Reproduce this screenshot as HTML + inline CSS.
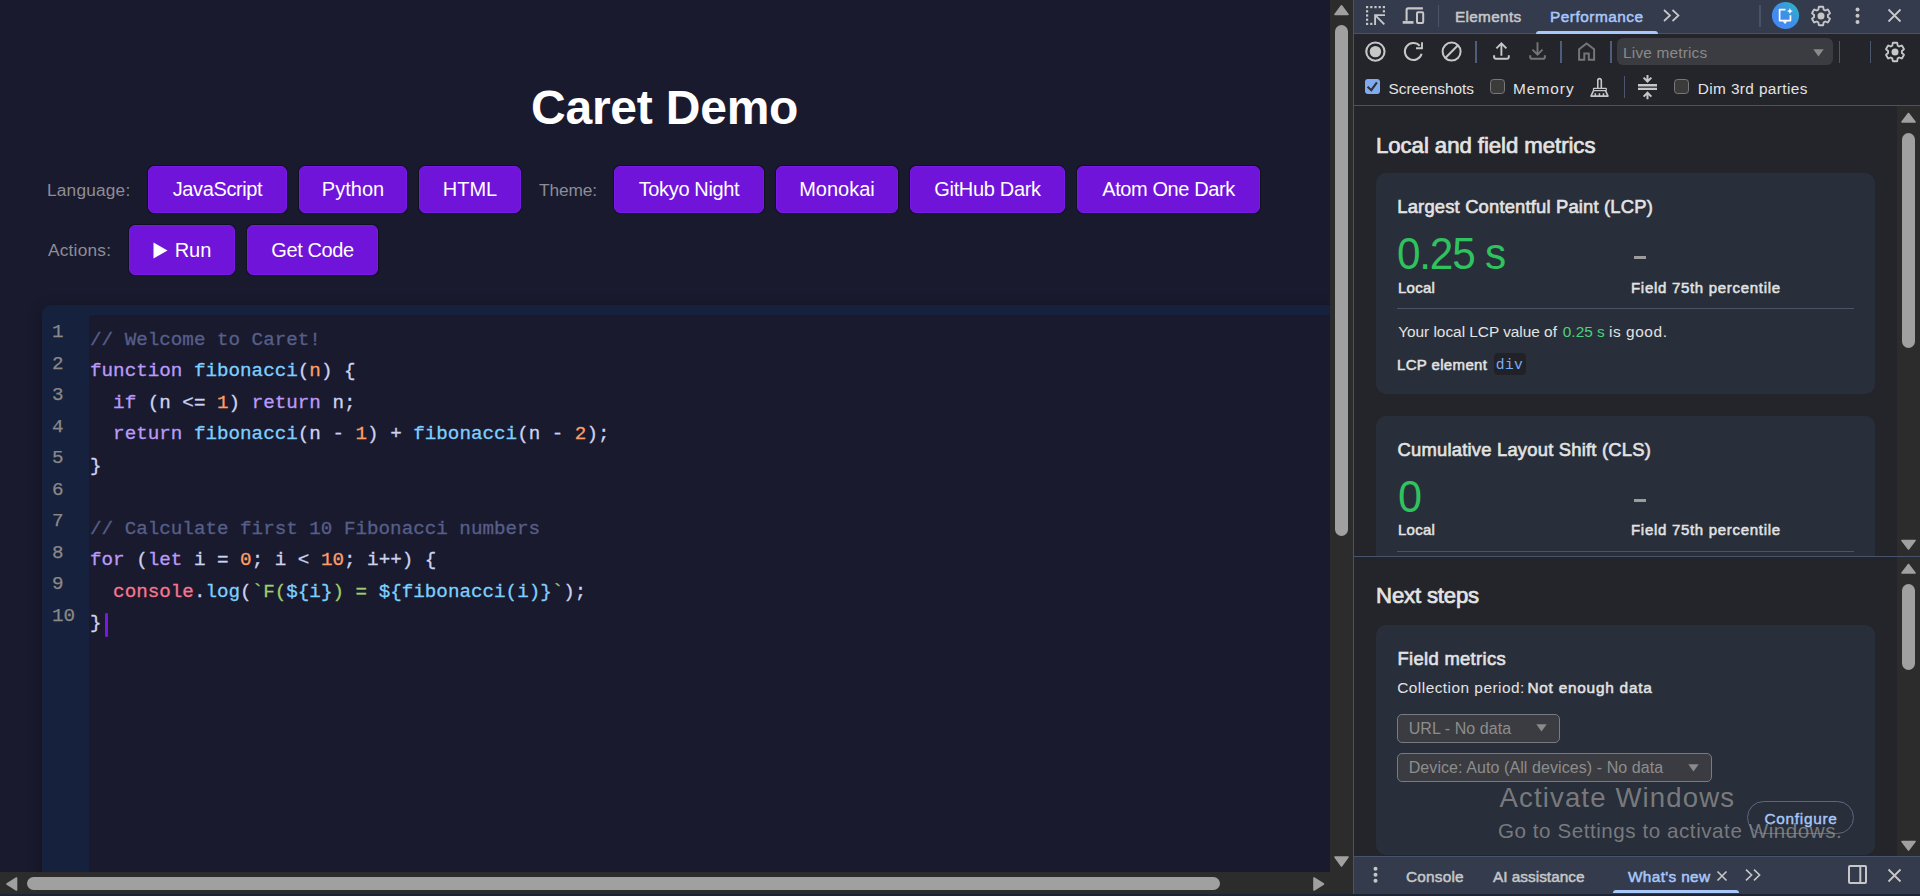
<!DOCTYPE html>
<html lang="en"><head><meta charset="utf-8"><title>Caret Demo</title>
<style>
*{box-sizing:border-box;margin:0;padding:0}
html,body{width:1920px;height:896px;overflow:hidden;background:#1a1a2e}
body{position:relative;font-family:"Liberation Sans",sans-serif;color:#e3e3e3}
.t{position:absolute;white-space:pre;line-height:1;display:block}
.b{position:absolute}
svg{position:absolute;overflow:visible}
h1,h2,h3{font-weight:inherit;font-size:inherit}
#page{position:absolute;left:0;top:0;width:1330px;height:872px;overflow:hidden;background:#1a1a2e}
button.pb{position:absolute;border:1px solid #7a18e6;background:#7014da;color:#fff;border-radius:6px;
 font:20px "Liberation Sans",sans-serif;display:flex;align-items:center;justify-content:center;white-space:pre;
 box-shadow:0 0 0 1px rgba(10,10,25,.55)}
.code{font-family:"Liberation Mono",monospace}
.k{color:#bb9af7}.f{color:#7dcfff}.n{color:#ff9e64}.c{color:#565f89}.p{color:#cdd3f0}.s{color:#9ece6a}.v{color:#f7768e}
#devtools{position:absolute;left:1353px;top:0;width:567px;height:896px;background:#24252a;overflow:hidden}
</style></head><body>
<main id="page">
<h1><span class="t" style="left:531.00px;top:84.17px;font-size:48px;color:#fff;font-weight:700;letter-spacing:-0.222px;">Caret Demo</span></h1>
<span class="t" style="left:47.00px;top:182.36px;font-size:17.3px;color:#8d8d95;letter-spacing:0.192px;">Language:</span>
<span class="t" style="left:539.00px;top:182.36px;font-size:17.3px;color:#8d8d95;letter-spacing:-0.1px;">Theme:</span>
<span class="t" style="left:48.00px;top:242.36px;font-size:17.3px;color:#8d8d95;letter-spacing:0.215px;">Actions:</span>
<button class="pb" style="left:148px;top:166px;width:139px;height:47px;letter-spacing:-0.39px">JavaScript</button>
<button class="pb" style="left:299px;top:166px;width:108px;height:47px">Python</button>
<button class="pb" style="left:419px;top:166px;width:102px;height:47px">HTML</button>
<button class="pb" style="left:614px;top:166px;width:150px;height:47px;letter-spacing:-0.35px">Tokyo Night</button>
<button class="pb" style="left:776px;top:166px;width:122px;height:47px">Monokai</button>
<button class="pb" style="left:910px;top:166px;width:155px;height:47px;letter-spacing:-0.33px">GitHub Dark</button>
<button class="pb" style="left:1077px;top:166px;width:183px;height:47px;letter-spacing:-0.4px">Atom One Dark</button>
<button class="pb" style="left:129px;top:225px;width:106px;height:50px"><svg style="position:static;margin-right:7px" width="15" height="17" viewBox="0 0 15 17"><path d="M0.5 0.5 L14.5 8.5 L0.5 16.5 Z" fill="#fff"/></svg>Run</button>
<button class="pb" style="left:247px;top:225px;width:131px;height:50px;letter-spacing:-0.39px">Get Code</button>
<div class="b" style="left:42px;top:305px;width:1358px;height:595px;background:#16213e;border-radius:9px 0 0 0;box-shadow:0 4px 14px rgba(0,0,0,.35)"></div>
<div class="b" style="left:89px;top:315px;width:1311px;height:585px;background:#1a1a2e;border-radius:3px 0 0 0"></div>
<span class="t" style="left:52.00px;top:323.05px;font-size:19.24px;color:#8a8986;font-family:'Liberation Mono', monospace;-webkit-text-stroke:0.25px #8a8986;">1</span>
<span class="t" style="left:52.00px;top:354.55px;font-size:19.24px;color:#8a8986;font-family:'Liberation Mono', monospace;-webkit-text-stroke:0.25px #8a8986;">2</span>
<span class="t" style="left:52.00px;top:386.05px;font-size:19.24px;color:#8a8986;font-family:'Liberation Mono', monospace;-webkit-text-stroke:0.25px #8a8986;">3</span>
<span class="t" style="left:52.00px;top:417.55px;font-size:19.24px;color:#8a8986;font-family:'Liberation Mono', monospace;-webkit-text-stroke:0.25px #8a8986;">4</span>
<span class="t" style="left:52.00px;top:449.05px;font-size:19.24px;color:#8a8986;font-family:'Liberation Mono', monospace;-webkit-text-stroke:0.25px #8a8986;">5</span>
<span class="t" style="left:52.00px;top:480.55px;font-size:19.24px;color:#8a8986;font-family:'Liberation Mono', monospace;-webkit-text-stroke:0.25px #8a8986;">6</span>
<span class="t" style="left:52.00px;top:512.05px;font-size:19.24px;color:#8a8986;font-family:'Liberation Mono', monospace;-webkit-text-stroke:0.25px #8a8986;">7</span>
<span class="t" style="left:52.00px;top:543.55px;font-size:19.24px;color:#8a8986;font-family:'Liberation Mono', monospace;-webkit-text-stroke:0.25px #8a8986;">8</span>
<span class="t" style="left:52.00px;top:575.05px;font-size:19.24px;color:#8a8986;font-family:'Liberation Mono', monospace;-webkit-text-stroke:0.25px #8a8986;">9</span>
<span class="t" style="left:52.00px;top:606.55px;font-size:19.24px;color:#8a8986;font-family:'Liberation Mono', monospace;-webkit-text-stroke:0.25px #8a8986;">10</span>
<span class="t code" style="left:90.00px;top:330.65px;font-size:19.24px;color:#cdd3f0;font-family:'Liberation Mono', monospace;-webkit-text-stroke:.3px"><span class="c">// Welcome to Caret!</span></span>
<span class="t code" style="left:90.00px;top:362.15px;font-size:19.24px;color:#cdd3f0;font-family:'Liberation Mono', monospace;-webkit-text-stroke:.3px"><span class="k">function</span> <span class="f">fibonacci</span><span class="p">(</span><span class="n">n</span><span class="p">) {</span></span>
<span class="t code" style="left:90.00px;top:393.65px;font-size:19.24px;color:#cdd3f0;font-family:'Liberation Mono', monospace;-webkit-text-stroke:.3px">  <span class="k">if</span> <span class="p">(n &lt;= </span><span class="n">1</span><span class="p">) </span><span class="k">return</span> <span class="p">n;</span></span>
<span class="t code" style="left:90.00px;top:425.15px;font-size:19.24px;color:#cdd3f0;font-family:'Liberation Mono', monospace;-webkit-text-stroke:.3px">  <span class="k">return</span> <span class="f">fibonacci</span><span class="p">(n - </span><span class="n">1</span><span class="p">) + </span><span class="f">fibonacci</span><span class="p">(n - </span><span class="n">2</span><span class="p">);</span></span>
<span class="t code" style="left:90.00px;top:456.65px;font-size:19.24px;color:#cdd3f0;font-family:'Liberation Mono', monospace;-webkit-text-stroke:.3px"><span class="p">}</span></span>
<span class="t code" style="left:90.00px;top:519.65px;font-size:19.24px;color:#cdd3f0;font-family:'Liberation Mono', monospace;-webkit-text-stroke:.3px"><span class="c">// Calculate first 10 Fibonacci numbers</span></span>
<span class="t code" style="left:90.00px;top:551.15px;font-size:19.24px;color:#cdd3f0;font-family:'Liberation Mono', monospace;-webkit-text-stroke:.3px"><span class="k">for</span> <span class="p">(</span><span class="k">let</span> <span class="p">i = </span><span class="n">0</span><span class="p">; i &lt; </span><span class="n">10</span><span class="p">; i++) {</span></span>
<span class="t code" style="left:90.00px;top:582.65px;font-size:19.24px;color:#cdd3f0;font-family:'Liberation Mono', monospace;-webkit-text-stroke:.3px">  <span class="v">console</span><span class="p">.</span><span class="f">log</span><span class="p">(</span><span class="s">`F(</span><span class="f">${i}</span><span class="s">) = </span><span class="f">${fibonacci(i)}</span><span class="s">`</span><span class="p">);</span></span>
<span class="t code" style="left:90.00px;top:614.15px;font-size:19.24px;color:#cdd3f0;font-family:'Liberation Mono', monospace;-webkit-text-stroke:.3px"><span class="p">}</span></span>
<div class="b" style="left:105.3px;top:613px;width:2.700000000000003px;height:24px;background:#7a18e2;border-radius:1.3px"></div>
</main>
<div class="b" style="left:1330px;top:0px;width:23px;height:894px;background:#2c2c2c;"></div>
<div class="b" style="left:0px;top:872px;width:1353px;height:22px;background:#2c2c2c;"></div>
<div class="b" style="left:1335px;top:25px;width:13px;height:510.5px;background:#a0a0a0;border-radius:6.5px"></div>
<div class="b" style="left:27px;top:877px;width:1193px;height:13px;background:#a0a0a0;border-radius:6.5px"></div>
<svg width="1920" height="896" style="left:0;top:0;pointer-events:none"><path d="M1341.5 5.8 L1348 14.4 L1335 14.4 Z" fill="#a0a0a0" stroke="#a0a0a0" stroke-width="1.6" stroke-linejoin="round"/></svg>
<svg width="1920" height="896" style="left:0;top:0;pointer-events:none"><path d="M1341.5 866 L1348 857 L1335 857 Z" fill="#a0a0a0" stroke="#a0a0a0" stroke-width="1.6" stroke-linejoin="round"/></svg>
<svg width="1920" height="896" style="left:0;top:0;pointer-events:none"><path d="M7 884 L16.5 878 L16.5 890 Z" fill="#a0a0a0" stroke="#a0a0a0" stroke-width="1.6" stroke-linejoin="round"/></svg>
<svg width="1920" height="896" style="left:0;top:0;pointer-events:none"><path d="M1323.5 884 L1314 878 L1314 890 Z" fill="#a0a0a0" stroke="#a0a0a0" stroke-width="1.6" stroke-linejoin="round"/></svg>
<div class="b" style="left:0px;top:894px;width:1920px;height:2px;background:#1c2433;"></div>
<aside id="devtools">
<div class="b" style="left:0px;top:0px;width:1px;height:896px;background:#47536b;"></div>
<div class="b" style="left:1px;top:0px;width:566px;height:33px;background:#333b4d;"></div>
<div class="b" style="left:1px;top:33px;width:566px;height:1px;background:#47536b;"></div>
<svg style="left:13px;top:6px" width="20" height="20" viewBox="0 0 20 20" fill="none"><g fill="#c7c7c7"><rect x="0" y="0" width="2.2" height="2.2"/><rect x="4.2" y="0" width="2.2" height="2.2"/><rect x="8.4" y="0" width="2.2" height="2.2"/><rect x="12.6" y="0" width="2.2" height="2.2"/><rect x="16.8" y="0" width="2.2" height="2.2"/><rect x="0" y="4.2" width="2.2" height="2.2"/><rect x="0" y="8.4" width="2.2" height="2.2"/><rect x="0" y="12.6" width="2.2" height="2.2"/><rect x="0" y="16.8" width="2.2" height="2.2"/><rect x="16.8" y="4.2" width="2.2" height="2.2"/><rect x="4.2" y="16.8" width="2.2" height="2.2"/></g><path d="M9.1 19V9.1H19M9.4 9.4L18.3 18.3" stroke="#c7c7c7" stroke-width="1.9"/></svg>
<svg style="left:49px;top:7px" width="24" height="17" viewBox="0 0 24 17" fill="none"><path d="M4.6 13.8V2.9a1.5 1.5 0 0 1 1.5-1.5H20.9" stroke="#c7c7c7" stroke-width="2.1"/><path d="M0.7 15.4h10.8" stroke="#c7c7c7" stroke-width="2.7"/><rect x="15" y="5.3" width="6.2" height="10.7" rx="0.9" stroke="#c7c7c7" stroke-width="2"/></svg>
<div class="b" style="left:85px;top:5px;width:1.2000000000000455px;height:22px;background:#4b5468;"></div>
<span class="t" style="left:101.90px;top:9.46px;font-size:15.4px;color:#c7c7c7;letter-spacing:0.302px;-webkit-text-stroke:0.5px #c7c7c7;">Elements</span>
<span class="t" style="left:197.00px;top:9.46px;font-size:15.4px;color:#a8c7fa;letter-spacing:0.5px;-webkit-text-stroke:0.5px #a8c7fa;">Performance</span>
<div class="b" style="left:183px;top:31px;width:122px;height:3px;background:#a8c7fa;border-radius:3px 3px 0 0"></div>
<svg style="left:310px;top:9px" width="17" height="13" viewBox="0 0 17 13" fill="none"><path d="M1 1l6 5.5L1 12M9.5 1l6 5.5-6 5.5" stroke="#c7c7c7" stroke-width="1.7"/></svg>
<div class="b" style="left:406.4000000000001px;top:5px;width:1.3999999999998636px;height:22px;background:#4a5268;"></div>
<svg style="left:419px;top:2px" width="27" height="27" viewBox="0 0 27 27" fill="none"><defs><linearGradient id="aig" x1="0.1" y1="0.9" x2="0.9" y2="0.1"><stop offset="0" stop-color="#4586f6"/><stop offset="0.5" stop-color="#3f8fe8"/><stop offset="1" stop-color="#2fb0c8"/></linearGradient></defs><circle cx="13.5" cy="13.5" r="13.6" fill="url(#aig)"/><path d="M13.5 7.6H7.6V18.6H18.45V13.3" stroke="#fff" stroke-width="1.7" stroke-linejoin="round"/><path d="M10.6 19.2h4.8L13 22.1z" fill="#fff"/><path d="M17.9 6.1l.9 2.1 2.1.9-2.1.9-.9 2.1-.9-2.1-2.1-.9 2.1-.9z" fill="#fff"/></svg>
<svg style="left:455.5px;top:3.6500000000000004px" width="24" height="24" viewBox="0 0 24 24" fill="none"><path d="M19.14 12.94c.04-.3.06-.61.06-.94 0-.32-.02-.64-.07-.94l2.03-1.58a.49.49 0 0 0 .12-.61l-1.92-3.32a.488.488 0 0 0-.59-.22l-2.39.96c-.5-.38-1.03-.7-1.62-.94l-.36-2.54a.484.484 0 0 0-.48-.41h-3.84c-.24 0-.43.17-.47.41l-.36 2.54c-.59.24-1.13.57-1.62.94l-2.39-.96c-.22-.08-.47 0-.59.22L2.74 8.87c-.12.21-.08.47.12.61l2.03 1.58c-.05.3-.09.63-.09.94s.02.64.07.94l-2.03 1.58a.49.49 0 0 0-.12.61l1.92 3.32c.12.22.37.29.59.22l2.39-.96c.5.38 1.03.7 1.62.94l.36 2.54c.05.24.24.41.48.41h3.84c.24 0 .44-.17.47-.41l.36-2.54c.59-.24 1.13-.56 1.62-.94l2.39.96c.22.08.47 0 .59-.22l1.92-3.32c.12-.22.07-.47-.12-.61l-2.01-1.58z" stroke="#c7c7c7" stroke-width="1.9" stroke-linejoin="round" transform="translate(12 12) scale(0.96 0.965) translate(-12 -12)"/><circle cx="12" cy="12" r="3.5" fill="#c7c7c7"/></svg>
<svg style="left:502px;top:7px" width="5" height="18" viewBox="0 0 5 18" fill="none"><circle cx="2.5" cy="2.5" r="2" fill="#c7c7c7"/><circle cx="2.5" cy="8.7" r="2" fill="#c7c7c7"/><circle cx="2.5" cy="15" r="2" fill="#c7c7c7"/></svg>
<svg style="left:535px;top:9px" width="13" height="13" viewBox="0 0 13 13" fill="none"><path d="M0.5 0.5l12 12M12.5 0.5l-12 12" stroke="#c7c7c7" stroke-width="1.8"/></svg>
<svg style="left:12px;top:41px" width="21" height="21" viewBox="0 0 21 21" fill="none"><circle cx="10.4" cy="10.6" r="9.15" stroke="#c7c7c7" stroke-width="2.1"/><circle cx="10.4" cy="10.6" r="5.7" fill="#c7c7c7"/></svg>
<svg style="left:50px;top:41px" width="22" height="22" viewBox="0 0 22 22" fill="none"><path d="M16.7 4.8A8.5 8.5 0 1 0 18.6 12.7" stroke="#c7c7c7" stroke-width="2"/><path d="M19 1.2V7.2H13" stroke="#c7c7c7" stroke-width="1.9"/></svg>
<svg style="left:88px;top:41px" width="21" height="21" viewBox="0 0 21 21" fill="none"><circle cx="10.6" cy="10.6" r="9" stroke="#c7c7c7" stroke-width="2"/><path d="M4.3 17L17 4.3" stroke="#c7c7c7" stroke-width="2"/></svg>
<div class="b" style="left:122.29999999999995px;top:41px;width:1.6000000000001364px;height:22px;background:#4e5d7a;"></div>
<svg style="left:140px;top:42px" width="17" height="18" viewBox="0 0 17 18" fill="none"><path d="M8.4 13.7V1.6M3.4 6.3L8.4 1.3l5 5" stroke="#c7c7c7" stroke-width="1.9"/><path d="M1.1 13.3v1.6a1.8 1.8 0 0 0 1.8 1.8h11.1a1.8 1.8 0 0 0 1.8-1.8v-1.6" stroke="#c7c7c7" stroke-width="2"/></svg>
<svg style="left:176px;top:42px" width="17" height="18" viewBox="0 0 17 18" fill="none"><path d="M8.5 0.2V12M3.5 7.6l5 5 5-5" stroke="#757575" stroke-width="1.9"/><path d="M1.2 13.3v1.6a1.8 1.8 0 0 0 1.8 1.8h11.1a1.8 1.8 0 0 0 1.8-1.8v-1.6" stroke="#757575" stroke-width="2"/></svg>
<div class="b" style="left:207.29999999999995px;top:41px;width:1.6000000000001364px;height:22px;background:#4e5d7a;"></div>
<svg style="left:225px;top:42px" width="17" height="19" viewBox="0 0 17 19" fill="none"><path d="M1.1 17.8V7.2L8.6 1.5l7.5 5.7V17.8h-5.3v-6.4H6.3V17.8z" stroke="#757575" stroke-width="2"/></svg>
<div class="b" style="left:257.29999999999995px;top:41px;width:1.6000000000001364px;height:22px;background:#4e5d7a;"></div>
<div class="b" style="left:264px;top:38px;width:216px;height:27px;background:#3b3c41;border-radius:6px"></div>
<span class="t" style="left:270.10px;top:44.96px;font-size:15.4px;color:#8a8a8a;letter-spacing:0.172px;">Live metrics</span>
<svg style="left:460px;top:49px" width="11" height="8" viewBox="0 0 11 8" fill="none"><path d="M0.3 0.3h10.4L5.5 7.6z" fill="#8a8a8a"/></svg>
<div class="b" style="left:486px;top:41px;width:1px;height:22px;background:#4a5670;"></div>
<div class="b" style="left:517px;top:41px;width:1px;height:22px;background:#4a5670;"></div>
<svg style="left:529.5px;top:39.5px" width="24" height="24" viewBox="0 0 24 24" fill="none"><path d="M19.14 12.94c.04-.3.06-.61.06-.94 0-.32-.02-.64-.07-.94l2.03-1.58a.49.49 0 0 0 .12-.61l-1.92-3.32a.488.488 0 0 0-.59-.22l-2.39.96c-.5-.38-1.03-.7-1.62-.94l-.36-2.54a.484.484 0 0 0-.48-.41h-3.84c-.24 0-.43.17-.47.41l-.36 2.54c-.59.24-1.13.57-1.62.94l-2.39-.96c-.22-.08-.47 0-.59.22L2.74 8.87c-.12.21-.08.47.12.61l2.03 1.58c-.05.3-.09.63-.09.94s.02.64.07.94l-2.03 1.58a.49.49 0 0 0-.12.61l1.92 3.32c.12.22.37.29.59.22l2.39-.96c.5.38 1.03.7 1.62.94l.36 2.54c.05.24.24.41.48.41h3.84c.24 0 .44-.17.47-.41l.36-2.54c.59-.24 1.13-.56 1.62-.94l2.39.96c.22.08.47 0 .59-.22l1.92-3.32c.12-.22.07-.47-.12-.61l-2.01-1.58z" stroke="#c7c7c7" stroke-width="1.9" stroke-linejoin="round" transform="translate(12 12) scale(0.96 0.965) translate(-12 -12)"/><circle cx="12" cy="12" r="3.5" fill="#c7c7c7"/></svg>
<div class="b" style="left:12px;top:79px;width:15px;height:15px;background:#80aaf0;border-radius:3px"><svg style="left:0;top:0" width="15" height="15" viewBox="0 0 15 15" fill="none"><path d="M2.6 7.8l3.7 3.4 5.6-7.9" stroke="#2f3034" stroke-width="2.1"/></svg></div>
<span class="t" style="left:35.50px;top:80.66px;font-size:15.4px;color:#e3e3e3;">Screenshots</span>
<div class="b" style="left:137px;top:79px;width:15px;height:15px;background:#3b3b3b;border-radius:3.5px;border:1.5px solid #787878"></div>
<span class="t" style="left:160.00px;top:80.66px;font-size:15.4px;color:#e3e3e3;letter-spacing:1.0px;">Memory</span>
<svg style="left:237px;top:78px" width="19" height="19" viewBox="0 0 19 19" fill="none"><path d="M7.8 10.2V2.4a1.75 1.75 0 0 1 3.5 0V10.2" stroke="#c7c7c7" stroke-width="1.6"/><rect x="3.5" y="10.4" width="12.8" height="2.1" rx="0.4" stroke="#c7c7c7" stroke-width="1.25"/><path d="M3.4 12.8L1 18.1H18L15.6 12.8" stroke="#c7c7c7" stroke-width="1.6" stroke-linejoin="round"/><path d="M5.3 18v-2.7M9.4 18v-2.7M13.5 18v-2.7" stroke="#c7c7c7" stroke-width="1.6"/></svg>
<div class="b" style="left:271px;top:76px;width:1px;height:22px;background:#4a5670;"></div>
<svg style="left:285px;top:75px" width="19" height="25" viewBox="0 0 19 25" fill="none"><path d="M0 10.25h19M0 13.95h19" stroke="#c7c7c7" stroke-width="2.3"/><path d="M9.5 0v6M5.6 2.6l3.9 3.9 3.9-3.9" stroke="#c7c7c7" stroke-width="2"/><path d="M9.5 24.2v-6M5.6 21.6l3.9-3.9 3.9 3.9" stroke="#c7c7c7" stroke-width="2"/></svg>
<div class="b" style="left:321px;top:79px;width:15px;height:15px;background:#3b3b3b;border-radius:3.5px;border:1.5px solid #787878"></div>
<span class="t" style="left:344.75px;top:80.66px;font-size:15.4px;color:#e3e3e3;letter-spacing:0.375px;">Dim 3rd parties</span>
<div class="b" style="left:1px;top:105px;width:566px;height:1px;background:#47536b;"></div>
<section id="metrics" class="b" style="left:1px;top:106px;width:566px;height:450px;overflow:hidden">
<h2><span class="t" style="left:22.00px;top:28.51px;font-size:22.2px;color:#e3e3e3;letter-spacing:-0.058px;-webkit-text-stroke:0.7px #e3e3e3;">Local and field metrics</span></h2>
<div class="b" style="left:22px;top:67px;width:499px;height:221px;background:#292f3a;border-radius:10px"></div>
<h3><span class="t" style="left:43.30px;top:92.22px;font-size:18.4px;color:#e3e3e3;letter-spacing:0.173px;-webkit-text-stroke:0.6px #e3e3e3;">Largest Contentful Paint (LCP)</span></h3>
<span class="t" style="left:42.80px;top:124.71px;font-size:45px;color:#30c25e;letter-spacing:-1.28px;transform:scaleX(.94);transform-origin:0 0;">0.25 s</span>
<div class="b" style="left:280px;top:150px;width:12px;height:3px;background:#9c9c9c;"></div>
<span class="t" style="left:43.90px;top:174.10px;font-size:15px;color:#e3e3e3;letter-spacing:0.275px;-webkit-text-stroke:0.5px #e3e3e3;">Local</span>
<span class="t" style="left:277.00px;top:174.10px;font-size:15px;color:#e3e3e3;letter-spacing:0.7px;-webkit-text-stroke:0.5px #e3e3e3;">Field 75th percentile</span>
<div class="b" style="left:43px;top:202px;width:457px;height:1px;background:#4a5468;"></div>
<p><span class="t" style="left:44.20px;top:217.96px;font-size:15.4px;color:#e3e3e3;letter-spacing:-0.018px;">Your local LCP value of</span><span class="t" style="left:208.80px;top:217.96px;font-size:15.4px;color:#4dd17a;">0.25 s </span><span class="t" style="left:255.00px;top:217.96px;font-size:15.4px;color:#e3e3e3;letter-spacing:0.571px;">is good.</span></p>
<span class="t" style="left:43.00px;top:251.30px;font-size:15px;color:#e3e3e3;letter-spacing:0.35px;-webkit-text-stroke:0.5px #e3e3e3;">LCP element</span>
<div class="b" style="left:140px;top:247px;width:32px;height:22px;background:#202227;border-radius:4px"></div>
<span class="t" style="left:141.80px;top:252.31px;font-size:14.6px;color:#7cacf8;font-family:'Liberation Mono', monospace;letter-spacing:0.35px;">div</span>
<div class="b" style="left:22px;top:310px;width:499px;height:224px;background:#292f3a;border-radius:10px"></div>
<h3><span class="t" style="left:43.50px;top:335.42px;font-size:18.4px;color:#e3e3e3;letter-spacing:0.214px;-webkit-text-stroke:0.6px #e3e3e3;">Cumulative Layout Shift (CLS)</span></h3>
<span class="t" style="left:43.50px;top:368.11px;font-size:45px;color:#30c25e;letter-spacing:-2.2px;transform:scaleX(.96);transform-origin:0 0;">0</span>
<div class="b" style="left:280px;top:393px;width:12px;height:3px;background:#9c9c9c;"></div>
<span class="t" style="left:43.90px;top:416.30px;font-size:15px;color:#e3e3e3;letter-spacing:0.275px;-webkit-text-stroke:0.5px #e3e3e3;">Local</span>
<span class="t" style="left:277.00px;top:416.30px;font-size:15px;color:#e3e3e3;letter-spacing:0.7px;-webkit-text-stroke:0.5px #e3e3e3;">Field 75th percentile</span>
<div class="b" style="left:43px;top:445px;width:457px;height:1px;background:#4a5468;"></div>
<div class="b" style="left:543px;top:0px;width:23px;height:450px;background:#2c2c2c;"></div>
<div class="b" style="left:548px;top:27px;width:13.299999999999955px;height:215px;background:#a0a0a0;border-radius:6.65px"></div>
<svg width="566" height="450" style="left:0;top:0"><path d="M554.5 7.5 L561 16 L548 16 Z M554.5 443 L561 434.5 L548 434.5 Z" fill="#a0a0a0" stroke="#a0a0a0" stroke-width="1.6" stroke-linejoin="round"/></svg>
</section>
<div class="b" style="left:1px;top:556px;width:566px;height:1px;background:#47536b;"></div>
<section id="next" class="b" style="left:1px;top:557px;width:566px;height:299px;overflow:hidden">
<h2><span class="t" style="left:22.10px;top:28.21px;font-size:22.2px;color:#e3e3e3;letter-spacing:-0.198px;-webkit-text-stroke:0.7px #e3e3e3;">Next steps</span></h2>
<div class="b" style="left:22px;top:68px;width:499px;height:230px;background:#292f3a;border-radius:10px"></div>
<h3><span class="t" style="left:43.50px;top:93.22px;font-size:18.4px;color:#e3e3e3;letter-spacing:0.324px;-webkit-text-stroke:0.6px #e3e3e3;">Field metrics</span></h3>
<p><span class="t" style="left:43.20px;top:122.96px;font-size:15.4px;color:#e3e3e3;letter-spacing:0.482px;">Collection period:</span><span class="t" style="left:173.40px;top:122.96px;font-size:15.4px;color:#e3e3e3;letter-spacing:0.757px;-webkit-text-stroke:0.5px #e3e3e3;">Not enough data</span></p>
<div class="b" style="left:43px;top:157px;width:163px;height:29px;background:#3b3c41;border:1px solid #767a82;border-radius:5px"></div>
<span class="t" style="left:54.70px;top:163.66px;font-size:16px;color:#8d8d8d;letter-spacing:0.067px;">URL - No data</span>
<svg style="left:182px;top:167px" width="11" height="8" viewBox="0 0 11 8"><path d="M0.3 0.3h10.4L5.5 7.6z" fill="#8a8a8a"/></svg>
<div class="b" style="left:43px;top:196px;width:315px;height:29px;background:#3b3c41;border:1px solid #767a82;border-radius:5px"></div>
<span class="t" style="left:54.70px;top:202.66px;font-size:16px;color:#8d8d8d;letter-spacing:0.083px;">Device: Auto (All devices) - No data</span>
<svg style="left:334px;top:207px" width="11" height="8" viewBox="0 0 11 8"><path d="M0.3 0.3h10.4L5.5 7.6z" fill="#8a8a8a"/></svg>
<div class="b" style="left:393px;top:244px;width:107px;height:33px;background:transparent;border:1px solid #5b6780;border-radius:17px"></div>
<span class="t" style="left:410.50px;top:253.96px;font-size:15.4px;color:#a8c7fa;letter-spacing:0.7px;-webkit-text-stroke:0.4px #a8c7fa;">Configure</span>
<span class="t" style="left:145.50px;top:226.64px;font-size:27.6px;color:rgba(150,150,150,.74);letter-spacing:1.118px;">Activate Windows</span>
<span class="t" style="left:144.00px;top:264.36px;font-size:20.6px;color:rgba(150,150,150,.74);letter-spacing:0.55px;">Go to Settings to activate Windows.</span>
<div class="b" style="left:543px;top:0px;width:23px;height:299px;background:#2c2c2c;"></div>
<div class="b" style="left:548px;top:26.5px;width:13.299999999999955px;height:86.5px;background:#a0a0a0;border-radius:6.65px"></div>
<svg width="566" height="299" style="left:0;top:0"><path d="M554.5 7.5 L561 16 L548 16 Z M554.5 293 L561 284.5 L548 284.5 Z" fill="#a0a0a0" stroke="#a0a0a0" stroke-width="1.6" stroke-linejoin="round"/></svg>
</section>
<div class="b" style="left:1px;top:856px;width:566px;height:38px;background:#333b4d;border-top:1px solid #47536b"></div>
<svg style="left:20px;top:866px" width="5" height="18" viewBox="0 0 5 18" fill="none"><circle cx="2.5" cy="2.7" r="2" fill="#c7c7c7"/><circle cx="2.5" cy="8.7" r="2" fill="#c7c7c7"/><circle cx="2.5" cy="14.7" r="2" fill="#c7c7c7"/></svg>
<span class="t" style="left:53.00px;top:868.96px;font-size:15.4px;color:#c7c7c7;letter-spacing:0.183px;-webkit-text-stroke:0.5px #c7c7c7;">Console</span>
<span class="t" style="left:140.00px;top:868.96px;font-size:15.4px;color:#c7c7c7;letter-spacing:-0.001px;-webkit-text-stroke:0.5px #c7c7c7;">AI assistance</span>
<span class="t" style="left:275.00px;top:868.96px;font-size:15.4px;color:#a8c7fa;letter-spacing:0.333px;-webkit-text-stroke:0.5px #a8c7fa;">What's new</span>
<svg style="left:364px;top:871px" width="10" height="10" viewBox="0 0 10 10" fill="none"><path d="M0.5 0.5l9 9M9.5 0.5l-9 9" stroke="#c7c7c7" stroke-width="1.6"/></svg>
<div class="b" style="left:260px;top:890px;width:126px;height:3px;background:#a8c7fa;border-radius:3px 3px 0 0"></div>
<svg style="left:391.5px;top:869px" width="16" height="12" viewBox="0 0 16 12" fill="none"><path d="M1 0.7l5.6 5.3L1 11.3M9 0.7l5.6 5.3L9 11.3" stroke="#c7c7c7" stroke-width="1.6"/></svg>
<svg style="left:495px;top:865px" width="19" height="19" viewBox="0 0 19 19" fill="none"><rect x="1" y="1" width="17" height="17" rx="1" stroke="#c7c7c7" stroke-width="2"/><path d="M12.3 1v17" stroke="#c7c7c7" stroke-width="2"/></svg>
<svg style="left:535px;top:868.5px" width="13" height="13" viewBox="0 0 13 13" fill="none"><path d="M0.5 0.5l12 12M12.5 0.5l-12 12" stroke="#c7c7c7" stroke-width="1.8"/></svg>
</aside>
<div class="b" style="left:0px;top:894px;width:1920px;height:2px;background:#1c2433;"></div>
</body></html>
